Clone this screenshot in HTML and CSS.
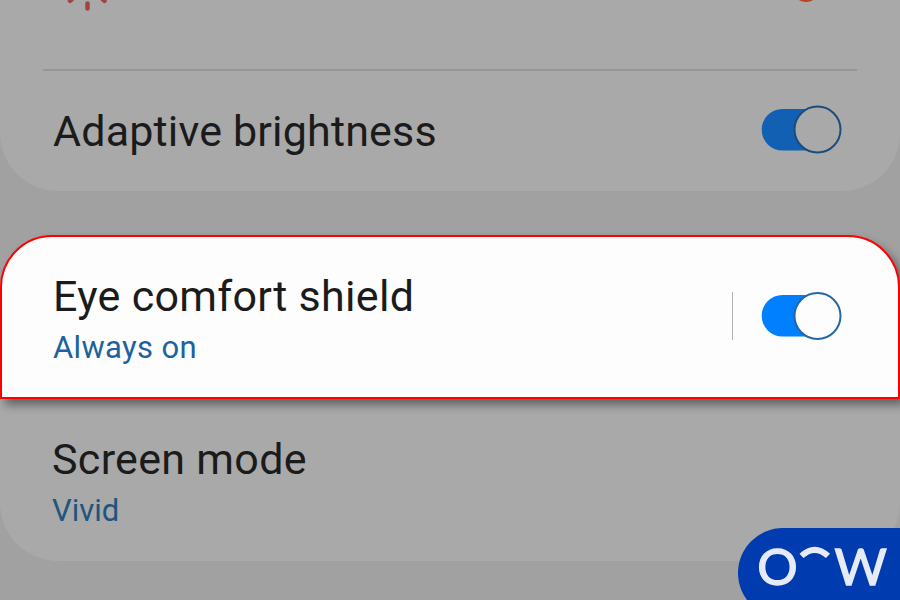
FILE: index.html
```html
<!DOCTYPE html>
<html lang="en">
<head>
<meta charset="utf-8">
<title>Display settings</title>
<link rel="stylesheet" href="styles.css">
</head>
<body>
<main class="screen">
  <section class="card card-top">
    <div class="slider">
      <svg class="sun" width="40" height="12" viewBox="0 0 40 12"><path d="M3 0.800 5-1M37.500 0.800 35.500-1M20.500 3.500V8.500" stroke="#a04443" stroke-width="4.500" stroke-linecap="round"/></svg>
      <svg class="thumb" width="28" height="4" viewBox="0 0 28 4"><circle cx="13" cy="-12" r="14" fill="#b84320"/></svg>
    </div>
    <div class="row row-adaptive">
      <h2 class="title adaptive">Adaptive brightness</h2>
      <svg class="toggle dim" width="82" height="50" viewBox="0 0 82 50"><rect class="track" x="1.700" y="4" width="72" height="41.500" rx="20.700"/><circle class="knob" cx="57.500" cy="24.500" r="23"/></svg>
    </div>
  </section>
  <section class="card highlight">
    <div class="labels">
      <h2 class="title eye">Eye comfort shield</h2>
      <p class="sub always">Always on</p>
    </div>
    <div class="control">
      <span class="divider"></span>
      <svg class="toggle" width="82" height="50" viewBox="0 0 82 50"><rect class="track" x="1.700" y="4" width="72" height="41.500" rx="20.700"/><circle class="knob" cx="57.500" cy="25" r="23"/></svg>
    </div>
  </section>
  <section class="card card-bottom">
    <h2 class="title mode">Screen mode</h2>
    <p class="sub vivid">Vivid</p>
  </section>
  <div class="badge">
    <svg width="162" height="72" viewBox="0 0 162 72">
      <text class="logo" x="19.300" y="57">O</text>
      <path d="M63.500 27.900Q76.700 15.700 90 27.900" fill="none" stroke="#e6ebf8" stroke-width="6"/>
      <text class="logo" x="96.500" y="57">W</text>
    </svg>
  </div>
</main>
</body>
</html>
```
FILE: styles.css
```css
* { box-sizing: border-box; }
body { margin: 0; font-family: Roboto, sans-serif; }
h2, p { margin: 0; font-weight: 400; white-space: nowrap; }

.screen {
  position: relative;
  width: 900px;
  height: 600px;
  overflow: hidden;
  background: #a1a1a1;
}
.card { background: #a9a9a9; }
.card-top {
  height: 191px;
  border-radius: 0 0 58px 58px;
  padding: 0 43px;
}
.slider {
  display: flex;
  justify-content: space-between;
  align-items: flex-start;
  height: 71px;
  padding: 0 36px 0 24px;
  border-bottom: 2px solid #969696;
}
.row-adaptive {
  display: flex;
  justify-content: space-between;
  align-items: center;
  height: 118px;
  padding: 0 15px 0 10px;
}
.title {
  font-size: 43px;
  line-height: 50px;
  letter-spacing: .3px;
  color: #1b1b1b;
}
.adaptive { letter-spacing: .18px; padding-top: 2px; }
.sub {
  font-size: 31px;
  line-height: 36px;
  color: #205b91;
}
.always { letter-spacing: .35px; color: #1c62a0; }
.vivid { color: #20557f; }
.toggle { display: block; flex: none; }
.track { fill: #007fff; }
.knob { fill: #fdfdfd; stroke: #2467a3; stroke-width: 2; }
.dim .track { fill: #1260b4; }
.dim .knob { fill: #a9a9a9; stroke: #1c4c7c; }

.highlight {
  position: relative;
  display: flex;
  justify-content: space-between;
  height: 164px;
  margin-top: 44px;
  padding: 34px 56px 0 51px;
  border: 2px solid #f00;
  border-radius: 52px 52px 0 0;
  background: #fdfdfd;
  box-shadow: 5px 6px 10px rgba(0, 0, 0, .42);
}
.highlight .sub { margin-top: 9px; }
.control {
  display: flex;
  align-items: center;
  gap: 27px;
  height: 90px;
}
.divider { width: 1px; height: 48px; background: #b4afb4; }
.card-bottom {
  height: 162px;
  padding: 35px 52px 0;
  border-radius: 0 0 58px 58px;
}
.card-bottom .sub { margin-top: 9px; }

.badge {
  position: absolute;
  left: 738px;
  top: 528px;
  width: 162px;
  height: 90px;
  border-radius: 45px 0 0 45px;
  background: #003bb0;
}
.badge svg { display: block; }
.logo {
  font-family: Lato, sans-serif;
  font-size: 50.500px;
  fill: #e6ebf8;
  stroke: #e6ebf8;
  stroke-width: 1.4px;
}
```
